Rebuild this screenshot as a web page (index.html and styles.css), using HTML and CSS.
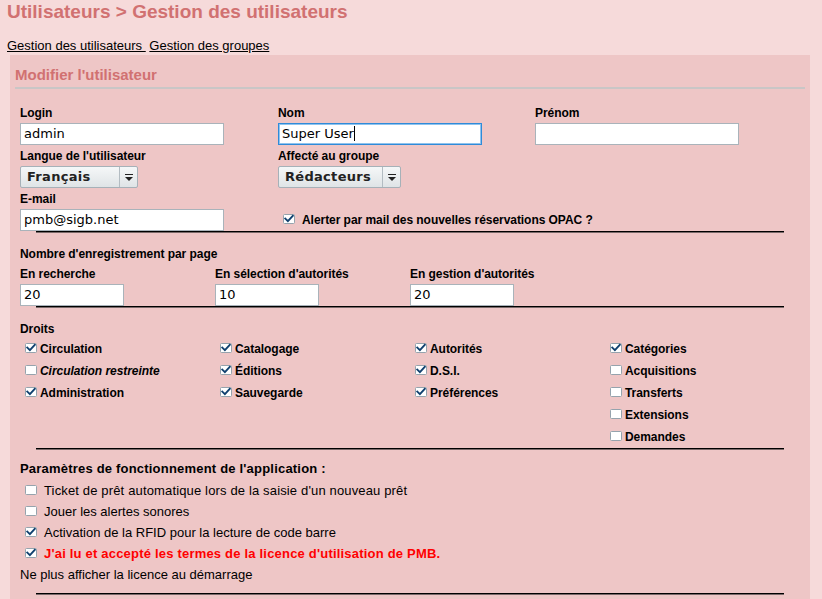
FILE: index.html
```html
<!DOCTYPE html>
<html lang="fr">
<head>
<meta charset="utf-8">
<title>Gestion des utilisateurs</title>
<link rel="stylesheet" href="styles.css">
</head>
<body>
<h1 class="page-title">Utilisateurs &gt; Gestion des utilisateurs</h1>
<div class="tabs"><a href="#" class="tab">Gestion des utilisateurs&nbsp;</a> <a href="#" class="tab">Gestion des groupes</a></div>

<div class="panel">
  <h2 class="panel-title">Modifier l'utilisateur</h2>

  <div class="fields">
    <div class="field"><div class="lbl">Login</div><div class="input w204">admin</div></div>
    <div class="field"><div class="lbl">Nom</div><div class="input w204 focus">Super User<span class="caret"></span></div></div>
    <div class="field"><div class="lbl">Prénom</div><div class="input w204"></div></div>

    <div class="field"><div class="lbl">Langue de l'utilisateur</div>
      <div class="select w118"><span class="sel-text">Français</span><span class="sel-btn"><span class="arrow"></span></span></div></div>
    <div class="field"><div class="lbl">Affecté au groupe</div>
      <div class="select w123"><span class="sel-text">Rédacteurs</span><span class="sel-btn"><span class="arrow"></span></span></div></div>
    <div class="field"></div>

    <div class="field"><div class="lbl">E-mail</div><div class="input w204">pmb@sigb.net</div></div>
    <div class="field"><div class="alert"><svg class="cb" width="12" height="10" viewBox="0 0 12 10"><rect x="0.5" y="0.5" width="11" height="9" rx="1" class="box"/><path d="M2.3 4.6 L4.9 7.2 L9.8 1.9" class="tick"/></svg><span class="alert-text">Alerter par mail des nouvelles réservations OPAC ?</span></div></div>
    <div class="field"></div>
  </div>
  <div class="rule"></div>

  <div class="section">
    <div class="lbl">Nombre d'enregistrement par page</div>
    <div class="counts">
      <div class="field"><div class="lbl">En recherche</div><div class="input w104">20</div></div>
      <div class="field"><div class="lbl">En sélection d'autorités</div><div class="input w104">10</div></div>
      <div class="field"><div class="lbl">En gestion d'autorités</div><div class="input w104">20</div></div>
    </div>
  </div>
  <div class="rule"></div>

  <div class="section">
    <div class="lbl droits-lbl">Droits</div>
    <div class="rights">
      <div class="rcol">
        <div class="right"><svg class="cb" width="12" height="10" viewBox="0 0 12 10"><rect x="0.5" y="0.5" width="11" height="9" rx="1" class="box"/><path d="M2.3 4.6 L4.9 7.2 L9.8 1.9" class="tick"/></svg>Circulation</div>
        <div class="right"><svg class="cb" width="12" height="10" viewBox="0 0 12 10"><rect x="0.5" y="0.5" width="11" height="9" rx="1" class="box"/></svg><i>Circulation restreinte</i></div>
        <div class="right"><svg class="cb" width="12" height="10" viewBox="0 0 12 10"><rect x="0.5" y="0.5" width="11" height="9" rx="1" class="box"/><path d="M2.3 4.6 L4.9 7.2 L9.8 1.9" class="tick"/></svg>Administration</div>
      </div>
      <div class="rcol">
        <div class="right"><svg class="cb" width="12" height="10" viewBox="0 0 12 10"><rect x="0.5" y="0.5" width="11" height="9" rx="1" class="box"/><path d="M2.3 4.6 L4.9 7.2 L9.8 1.9" class="tick"/></svg>Catalogage</div>
        <div class="right"><svg class="cb" width="12" height="10" viewBox="0 0 12 10"><rect x="0.5" y="0.5" width="11" height="9" rx="1" class="box"/><path d="M2.3 4.6 L4.9 7.2 L9.8 1.9" class="tick"/></svg>Éditions</div>
        <div class="right"><svg class="cb" width="12" height="10" viewBox="0 0 12 10"><rect x="0.5" y="0.5" width="11" height="9" rx="1" class="box"/><path d="M2.3 4.6 L4.9 7.2 L9.8 1.9" class="tick"/></svg>Sauvegarde</div>
      </div>
      <div class="rcol">
        <div class="right"><svg class="cb" width="12" height="10" viewBox="0 0 12 10"><rect x="0.5" y="0.5" width="11" height="9" rx="1" class="box"/><path d="M2.3 4.6 L4.9 7.2 L9.8 1.9" class="tick"/></svg>Autorités</div>
        <div class="right"><svg class="cb" width="12" height="10" viewBox="0 0 12 10"><rect x="0.5" y="0.5" width="11" height="9" rx="1" class="box"/><path d="M2.3 4.6 L4.9 7.2 L9.8 1.9" class="tick"/></svg>D.S.I.</div>
        <div class="right"><svg class="cb" width="12" height="10" viewBox="0 0 12 10"><rect x="0.5" y="0.5" width="11" height="9" rx="1" class="box"/><path d="M2.3 4.6 L4.9 7.2 L9.8 1.9" class="tick"/></svg>Préférences</div>
      </div>
      <div class="rcol">
        <div class="right"><svg class="cb" width="12" height="10" viewBox="0 0 12 10"><rect x="0.5" y="0.5" width="11" height="9" rx="1" class="box"/><path d="M2.3 4.6 L4.9 7.2 L9.8 1.9" class="tick"/></svg>Catégories</div>
        <div class="right"><svg class="cb" width="12" height="10" viewBox="0 0 12 10"><rect x="0.5" y="0.5" width="11" height="9" rx="1" class="box"/></svg>Acquisitions</div>
        <div class="right"><svg class="cb" width="12" height="10" viewBox="0 0 12 10"><rect x="0.5" y="0.5" width="11" height="9" rx="1" class="box"/></svg>Transferts</div>
        <div class="right"><svg class="cb" width="12" height="10" viewBox="0 0 12 10"><rect x="0.5" y="0.5" width="11" height="9" rx="1" class="box"/></svg>Extensions</div>
        <div class="right"><svg class="cb" width="12" height="10" viewBox="0 0 12 10"><rect x="0.5" y="0.5" width="11" height="9" rx="1" class="box"/></svg>Demandes</div>
      </div>
    </div>
  </div>
  <div class="rule"></div>

  <div class="section params">
    <div class="params-title">Paramètres de fonctionnement de l'application :</div>
    <div class="opt wide"><svg class="cb" width="12" height="10" viewBox="0 0 12 10"><rect x="0.5" y="0.5" width="11" height="9" rx="1" class="box"/></svg>Ticket de prêt automatique lors de la saisie d'un nouveau prêt</div>
    <div class="opt"><svg class="cb" width="12" height="10" viewBox="0 0 12 10"><rect x="0.5" y="0.5" width="11" height="9" rx="1" class="box"/></svg>Jouer les alertes sonores</div>
    <div class="opt"><svg class="cb" width="12" height="10" viewBox="0 0 12 10"><rect x="0.5" y="0.5" width="11" height="9" rx="1" class="box"/><path d="M2.3 4.6 L4.9 7.2 L9.8 1.9" class="tick"/></svg>Activation de la RFID pour la lecture de code barre</div>
    <div class="opt licence"><svg class="cb" width="12" height="10" viewBox="0 0 12 10"><rect x="0.5" y="0.5" width="11" height="9" rx="1" class="box"/><path d="M2.3 4.6 L4.9 7.2 L9.8 1.9" class="tick"/></svg>J'ai lu et accepté les termes de la licence d'utilisation de PMB.</div>
    <div class="opt plain">Ne plus afficher la licence au démarrage</div>
  </div>
  <div class="rule last"></div>
</div>
</body>
</html>
```
FILE: styles.css
```css
html, body {
  margin: 0;
  padding: 0;
}
body {
  background: #f6dada;
  font-family: "Liberation Sans", Arial, sans-serif;
  font-size: 12px;
  color: #000;
  overflow: hidden;
}
.page-title {
  margin: 0;
  padding: 1px 0 0 7px;
  font-size: 19px;
  line-height: 22px;
  font-weight: bold;
  color: #d17171;
}
.tabs {
  margin-top: 15px;
  padding-left: 7px;
  font-size: 13px;
  line-height: 15px;
  height: 15px;
}
.tab {
  color: #000;
  text-decoration: underline;
}
.panel {
  margin: 2px 0 0 10px;
  width: 800px;
  height: 560px;
  background: #eec6c6;
  padding-top: 11px;
  box-sizing: border-box;
}
.panel-title {
  margin: 0 5px;
  padding-bottom: 4px;
  border-bottom: 2px solid #c9c6c6;
  font-size: 15px;
  line-height: 17px;
  font-weight: bold;
  color: #d17171;
}
.lbl {
  font-weight: bold;
  line-height: 14px;
  letter-spacing: -0.05px;
}
.field .lbl {
  margin-bottom: 3px;
}
.fields {
  display: grid;
  grid-template-columns: 258px 257px 204px;
  row-gap: 4px;
  padding: 17px 0 0 10px;
}
.input {
  height: 22px;
  box-sizing: border-box;
  border: 1px solid #a9b3ba;
  background: #fff;
  font-family: "DejaVu Sans", sans-serif;
  font-size: 13px;
  line-height: 20px;
  padding-left: 3px;
  color: #000;
  white-space: nowrap;
}
.input.focus {
  border: 1px solid #2f8bd9;
  box-shadow: inset 0 0 0 1px #8fc3ee;
}
.caret {
  display: inline-block;
  width: 1px;
  height: 15px;
  background: #000;
  vertical-align: -3px;
}
.w204 { width: 204px; }
.w104 { width: 104px; }
.w118 { width: 118px; }
.w123 { width: 123px; }
.select {
  height: 22px;
  box-sizing: border-box;
  border: 1px solid #a6b1b8;
  border-radius: 2px;
  background: linear-gradient(#f5f7f8, #dfe4e6);
  display: flex;
  align-items: stretch;
  font-family: "DejaVu Sans", sans-serif;
  font-weight: bold;
  font-size: 13px;
  color: #222;
}
.sel-text {
  flex: 1;
  padding-left: 6px;
  line-height: 20px;
  letter-spacing: 0.3px;
}
.sel-btn {
  width: 17px;
  border-left: 1px solid #b3bcc2;
  display: flex;
  align-items: center;
  justify-content: center;
}
.arrow {
  width: 0;
  height: 0;
  border-left: 4px solid transparent;
  border-right: 4px solid transparent;
  border-top: 4px solid #222;
  position: relative;
  margin-top: 3px;
}
.arrow::before {
  content: "";
  position: absolute;
  left: -4px;
  top: -7px;
  width: 8px;
  height: 1px;
  background: #222;
}
.alert {
  margin-top: 17px;
  padding-left: 5px;
  line-height: 22px;
  font-weight: bold;
  letter-spacing: -0.05px;
  white-space: nowrap;
}
.cb {
  display: inline-block;
  vertical-align: baseline;
}
.cb .box {
  fill: #fff;
  stroke: #95a3ad;
  stroke-width: 1;
}
.cb .tick {
  fill: none;
  stroke: #10406f;
  stroke-width: 1.9;
  stroke-linecap: square;
}
.alert .cb {
  margin-right: 7px;
}
.rule {
  margin-left: 26px;
  width: 748px;
  height: 0;
  border-top: 1px solid #000;
  border-bottom: 1px solid #7a6a6a;
}
.section {
  padding: 14px 0 0 10px;
}
.counts {
  display: grid;
  grid-template-columns: 195px 195px 195px;
  margin-top: 6px;
}
.droits-lbl {
  margin-bottom: 2px;
}
.rights {
  display: grid;
  grid-template-columns: repeat(4, 195px);
  padding-left: 5px;
}
.right {
  line-height: 22px;
  height: 22px;
  font-weight: bold;
  letter-spacing: -0.05px;
  white-space: nowrap;
}
.right .cb {
  margin-right: 3px;
}
.params {
  padding-top: 12px;
}
.params-title {
  font-weight: bold;
  font-size: 13px;
  line-height: 14px;
  margin-bottom: 4px;
  letter-spacing: 0.2px;
}
.opt {
  font-size: 13px;
  line-height: 21px;
  height: 21px;
  padding-left: 5px;
  white-space: nowrap;
}
.opt.wide {
  letter-spacing: 0.15px;
}
.opt .cb {
  margin-right: 7px;
}
.opt.licence {
  color: #f00;
  font-weight: bold;
  letter-spacing: 0.2px;
}
.opt.plain {
  padding-left: 0;
}
.rule.last {
  margin-top: 8px;
}
```
